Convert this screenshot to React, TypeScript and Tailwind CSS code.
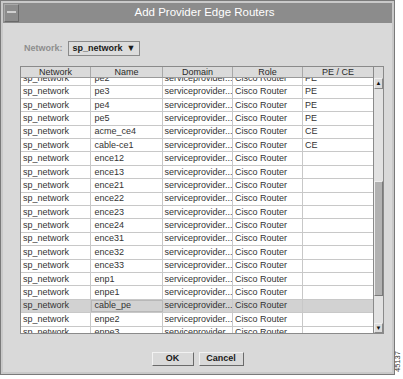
import React from "react";

const rows: [string, string][] = [
  ["pe2", "PE"],
  ["pe3", "PE"],
  ["pe4", "PE"],
  ["pe5", "PE"],
  ["acme_ce4", "CE"],
  ["cable-ce1", "CE"],
  ["ence12", ""],
  ["ence13", ""],
  ["ence21", ""],
  ["ence22", ""],
  ["ence23", ""],
  ["ence24", ""],
  ["ence31", ""],
  ["ence32", ""],
  ["ence33", ""],
  ["enp1", ""],
  ["enpe1", ""],
  ["cable_pe", ""],
  ["enpe2", ""],
  ["enpe3", ""],
];

const font = { fontFamily: '"Liberation Sans", Arial, sans-serif' };

export default function App() {
  return (
    <div className="w-[403px] h-[379px] bg-white relative overflow-hidden" style={font}>
      <div className="w-[395px] h-[375px] border border-[#7a7a7a] bg-[#c9c9c9] p-[2px] flex flex-col">
        {/* Title bar */}
        <div className="h-[20px] bg-[#8c8c8c] flex items-stretch shrink-0">
          <div className="w-[15px] ml-[1px] my-[1px] border border-[#a8a8a8] border-r-[#6a6a6a] border-b-[#6a6a6a] flex items-center justify-center">
            <div className="w-[9px] h-[2px] bg-[#d0d0d0] mb-[3px]" />
          </div>
          <div className="flex-1 flex items-center justify-center text-white text-[11.5px] leading-none pr-[2px]">
            Add Provider Edge Routers
          </div>
        </div>
        {/* Body */}
        <div className="flex-1 bg-[#d9d9d9] flex flex-col">
          <div className="flex items-center mt-[17.5px] pl-[21px] h-[15px]">
            <span className="text-[9px] font-bold text-[#8e8e8e] leading-none">Network:</span>
            <div className="ml-[5.5px] w-[71.5px] h-[15px] border border-[#8a8a8a] bg-[#dcdcdc] flex items-center pl-[3.5px] gap-[4px]">
              <span className="text-[9px] font-bold text-[#1a1a1a] leading-none">sp_network</span>
              <span className="text-[9px] text-[#1a1a1a] leading-none">▼</span>
            </div>
          </div>
          {/* Table */}
          <div className="ml-[17px] mt-[10.5px] w-[364px] h-[268px] border border-[#8a8a8a] flex bg-[#d9d9d9]">
            <div className="flex flex-col w-[352px]">
              <div className="h-[10.5px] flex text-[9px] text-[#2a2a2a] leading-none border-b border-[#9a9a9a] bg-[#dadada] shrink-0">
                <div className="w-[70px] border-r border-[#a8a8a8] flex items-end justify-center">Network</div>
                <div className="w-[72px] border-r border-[#a8a8a8] flex items-end justify-center">Name</div>
                <div className="w-[70px] border-r border-[#a8a8a8] flex items-end justify-center">Domain</div>
                <div className="w-[70px] border-r border-[#a8a8a8] flex items-end justify-center">Role</div>
                <div className="w-[70px] flex items-end justify-center">PE / CE</div>
              </div>
              <div className="flex-1 overflow-hidden bg-white">
                <div className="-mt-[5.4px]">
                  {rows.map(([name, pece]) => {
                    const sel = name === "cable_pe";
                    return (
                      <div
                        key={name}
                        className={`h-[13.4px] flex items-center text-[9px] text-[#333333] leading-none border-b border-[#c8c8c8] ${sel ? "bg-[#d2d2d2]" : "bg-white"}`}
                      >
                        <div className="w-[70px] h-full flex items-center pl-[2px] border-r border-[#c8c8c8] whitespace-nowrap overflow-hidden">sp_network</div>
                        <div className={`w-[72px] h-full flex items-center pl-[3.5px] border-r border-[#c8c8c8] whitespace-nowrap overflow-hidden ${sel ? "outline outline-1 outline-[#b8b8b8] -outline-offset-1" : ""}`}>{name}</div>
                        <div className="w-[70px] h-full flex items-center pl-[1.5px] border-r border-[#c8c8c8] whitespace-nowrap overflow-hidden">serviceprovider....</div>
                        <div className="w-[70px] h-full flex items-center pl-[2px] border-r border-[#c8c8c8] whitespace-nowrap overflow-hidden">Cisco Router</div>
                        <div className="w-[70px] h-full flex items-center pl-[2px] whitespace-nowrap overflow-hidden">{pece}</div>
                      </div>
                    );
                  })}
                </div>
              </div>
            </div>
            {/* Scrollbar */}
            <div className="w-[11px] flex flex-col border-l border-[#8a8a8a]">
              <div className="h-[10.5px] bg-[#d9d9d9] shrink-0" />
              <div className="h-[11px] bg-[#dcdcdc] border border-[#f0f0f0] border-r-[#888] border-b-[#888] flex items-center justify-center shrink-0">
                <span className="text-[6px] leading-none text-[#111]">▲</span>
              </div>
              <div className="flex-1 bg-[#e2e2e2] flex flex-col">
                <div className="h-[92px]" />
                <div className="h-[115px] bg-[#b2b2b2] border border-[#eeeeee] border-r-[#7a7a7a] border-b-[#7a7a7a]" />
              </div>
              <div className="h-[10px] bg-[#dcdcdc] border border-[#f0f0f0] border-r-[#888] border-b-[#888] flex items-center justify-center shrink-0">
                <span className="text-[6px] leading-none text-[#111]">▼</span>
              </div>
            </div>
          </div>
          {/* Buttons */}
          <div className="flex justify-center gap-[5px] mt-[17.5px]">
            <div className="w-[42px] h-[14.5px] border border-[#f2f2f2] border-r-[#6a6a6a] border-b-[#6a6a6a] flex items-center justify-center text-[9px] font-bold text-[#1a1a1a] leading-none">OK</div>
            <div className="w-[45px] h-[14.5px] border border-[#f2f2f2] border-r-[#6a6a6a] border-b-[#6a6a6a] flex items-center justify-center text-[9px] font-bold text-[#1a1a1a] leading-none">Cancel</div>
          </div>
        </div>
      </div>
      <div className="absolute left-[394px] top-[372px] origin-top-left -rotate-90 text-[7.5px] leading-none text-[#333] whitespace-nowrap">
        45137
      </div>
    </div>
  );
}
